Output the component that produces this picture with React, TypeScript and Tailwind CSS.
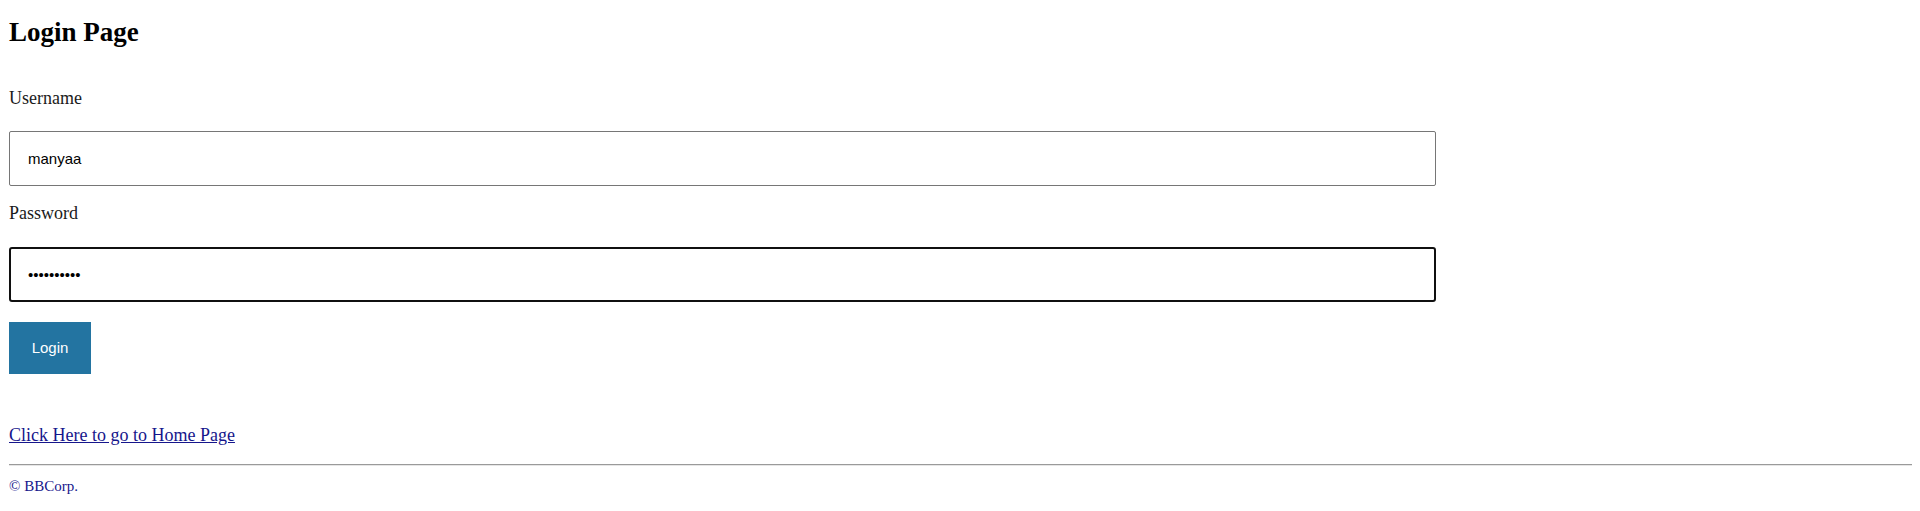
import { useEffect, useRef, useState } from "react";

const serif = "font-['Liberation_Serif','Times_New_Roman',serif]";
const sans = "font-['Liberation_Sans',Arial,sans-serif]";

const App: React.FC = () => {
  const [username, setUsername] = useState<string>("manyaa");
  const [password, setPassword] = useState<string>("manyaa1234");
  const passwordRef = useRef<HTMLInputElement>(null);

  // foco no campo de senha, cursor no fim
  useEffect(() => {
    const el = passwordRef.current;
    if (el) {
      el.focus();
      el.setSelectionRange(el.value.length, el.value.length);
    }
  }, []);

  return (
    <div className={`${serif} min-h-[511px] bg-white pl-[9px] pr-[8px] text-black`}>
      <h2 className="pt-[17px] text-[27px] font-bold leading-[31px]">Login Page</h2>

      <form className="w-3/4" onSubmit={(e) => e.preventDefault()}>
        <label htmlFor="username" className="mt-[40px] block text-[18px] leading-[21px] text-[#1a1a1a]">
          Username
        </label>
        <input
          id="username"
          type="text"
          value={username}
          onChange={(e) => setUsername(e.target.value)}
          className={`${sans} mt-[22px] block h-[55px] w-full rounded-[2px] border border-[#767676] pl-[18px] text-[15px] text-black outline-none`}
        />

        <label htmlFor="password" className="mt-[17px] block text-[18px] leading-[21px] text-[#1a1a1a]">
          Password
        </label>
        <input
          id="password"
          ref={passwordRef}
          type="password"
          value={password}
          onChange={(e) => setPassword(e.target.value)}
          className={`${sans} mt-[23px] block h-[55px] w-full rounded-[3px] border-2 border-[#101010] pl-[17px] text-[15px] text-black caret-black outline-none`}
        />

        <button
          type="submit"
          className={`${sans} mt-[20px] flex h-[52px] w-[82px] items-center justify-center bg-[#2374a1] text-[15px] text-white`}
        >
          Login
        </button>
      </form>

      <a href="#" className="mt-[51px] block w-fit text-[18px] leading-[21px] text-[#16168c] underline">
        Click Here to go to Home Page
      </a>

      <hr className="mt-[18px] border-t border-b border-t-[#9a9a9a] border-b-[#e6e6e6]" />

      <footer className="mt-[12px] text-[15px] leading-[17px] text-[#16168c]">© BBCorp.</footer>
    </div>
  );
};

export default App;
